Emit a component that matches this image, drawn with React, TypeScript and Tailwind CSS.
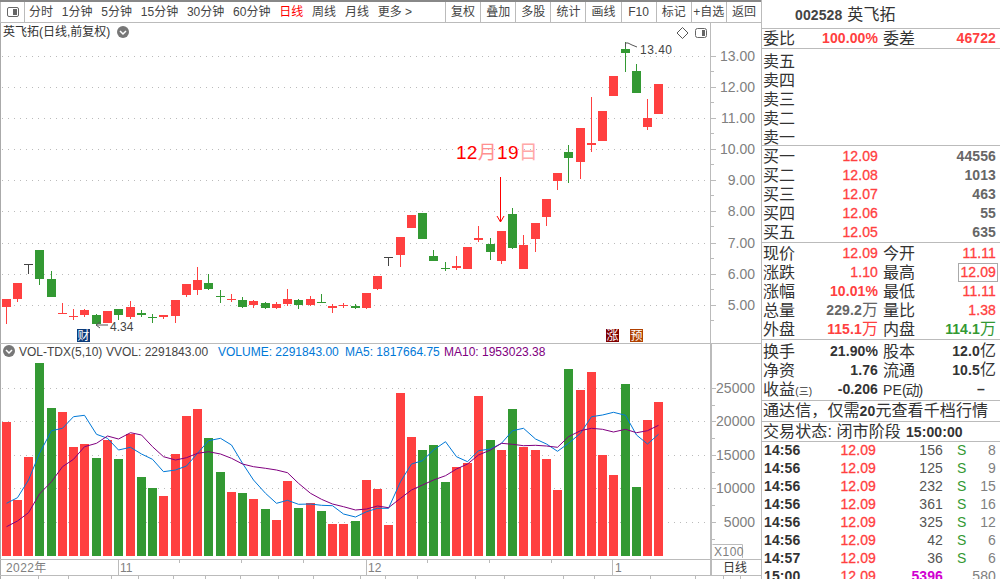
const RED = "#ff4040";
const GREEN = "#339933";

const barX = [
  2, 13, 24, 35, 47, 58, 69, 80, 92, 103, 114, 126, 137, 148, 159, 171, 182, 193, 204, 216, 227, 238, 249, 261, 272, 283,
  294, 306, 317, 328, 339, 351, 362, 373, 384, 396, 407, 418, 429, 441, 452, 463, 474, 486, 497, 508, 519, 531, 542, 553,
  564, 576, 587, 598, 609, 621, 632, 643, 654,
];

// color, body top, body bottom, high, low (page pixels)
type Candle = ["r" | "g" | "k", number, number, number, number];
const candles: Candle[] = [
  ["r", 299, 307, 299, 324], ["r", 283, 299, 283, 302], ["k", 264, 265, 264, 274], ["g", 250, 279, 250, 285],
  ["g", 279, 297, 271, 297], ["r", 313, 314, 303, 314], ["r", 316, 317, 309, 320], ["r", 310, 315, 309, 317],
  ["g", 315, 324, 314, 324], ["r", 311, 323, 311, 323], ["g", 309, 315, 309, 320], ["r", 307, 317, 301, 319],
  ["g", 313, 315, 310, 317], ["g", 317, 318, 314, 323], ["r", 315, 317, 315, 319], ["r", 300, 316, 300, 323],
  ["r", 284, 295, 284, 297], ["r", 280, 290, 267, 295], ["g", 283, 289, 274, 290], ["g", 296, 297, 290, 303],
  ["r", 299, 300, 294, 302], ["g", 300, 307, 297, 308], ["r", 301, 305, 300, 308], ["g", 303, 308, 302, 309],
  ["r", 304, 308, 302, 309], ["r", 299, 304, 289, 306], ["g", 300, 305, 299, 309], ["r", 299, 305, 296, 306],
  ["g", 302, 303, 294, 303], ["r", 306, 308, 304, 313], ["r", 305, 306, 303, 308], ["g", 306, 308, 304, 309],
  ["r", 293, 308, 293, 309], ["r", 276, 289, 276, 290], ["k", 257, 258, 257, 266], ["r", 237, 255, 237, 267],
  ["r", 215, 228, 215, 228], ["g", 213, 239, 213, 239], ["g", 256, 261, 250, 261], ["g", 268, 269, 262, 271],
  ["r", 266, 268, 256, 270], ["r", 247, 269, 247, 269], ["r", 238, 240, 226, 242], ["g", 244, 252, 238, 260],
  ["r", 231, 261, 231, 264], ["g", 214, 248, 208, 249], ["r", 245, 269, 235, 269], ["r", 223, 239, 223, 252],
  ["r", 199, 217, 199, 226], ["r", 173, 181, 173, 190], ["g", 152, 158, 145, 183], ["r", 128, 162, 128, 179],
  ["r", 143, 145, 97, 152], ["r", 111, 141, 111, 141], ["r", 76, 96, 76, 96], ["g", 49, 53, 42, 72],
  ["g", 71, 93, 64, 93], ["r", 118, 127, 99, 130], ["r", 84, 114, 84, 114],
];

// color, bar top
const volumes: ["r" | "g", number][] = [
  ["r", 422], ["r", 500], ["r", 457], ["g", 363], ["g", 408], ["r", 412], ["r", 447], ["r", 444], ["g", 458], ["r", 440],
  ["g", 459], ["r", 434], ["g", 477], ["g", 488], ["r", 496], ["r", 454], ["r", 416], ["r", 409], ["g", 438], ["g", 472],
  ["r", 492], ["g", 493], ["r", 499], ["g", 509], ["r", 520], ["r", 481], ["g", 508], ["r", 503], ["g", 511], ["r", 524],
  ["r", 524], ["g", 521], ["r", 480], ["r", 489], ["r", 525], ["r", 393], ["r", 437], ["g", 450], ["g", 445], ["g", 482],
  ["r", 467], ["r", 463], ["r", 396], ["g", 440], ["r", 450], ["g", 409], ["r", 447], ["r", 450], ["r", 459], ["r", 490],
  ["g", 369], ["r", 390], ["r", 372], ["r", 455], ["r", 475], ["g", 384], ["g", 487], ["r", 420], ["r", 402],
];

const ma5 = [
  503.3, 497.7, 480, 453.3, 430.7, 428.3, 416.7, 415.3, 434.3, 438.3, 450, 447.3, 454, 459.3, 471.7, 470, 466, 453.3, 440.7,
  438.3, 445, 463.3, 480, 493.3, 503.3, 500.3, 504.3, 504, 505.3, 505.7, 514, 517, 511.7, 508.3, 508.3, 481.7, 464, 460.7,
  450, 441.7, 456.7, 461.7, 450.7, 449, 443.3, 430.7, 428.3, 439, 444, 451.3, 443.3, 433.3, 416.7, 415, 412.3, 415.3, 435,
  444, 434.3,
];
const ma10 = [
  526.7, 521, 512.7, 494, 481.7, 466.7, 459.3, 446.7, 443.3, 436, 439, 432.7, 435, 446.7, 456.7, 460, 457.7, 453.3, 451.7,
  454, 458.3, 464, 466.7, 468.3, 470, 472.7, 483.3, 493.3, 499.3, 504, 506.7, 510, 509, 506, 507.7, 498.3, 490, 485, 480,
  475.7, 469, 464, 455, 450, 443.3, 444.3, 445.7, 445.3, 446, 447.3, 436.7, 430.7, 428.3, 429.3, 432, 429.3, 432.7, 430.7,
  425.3,
];

const priceLevels: [string, number][] = [
  ["13.00", 56], ["12.00", 87], ["11.00", 118], ["10.00", 149], ["9.00", 180], ["8.00", 211], ["7.00", 243], ["6.00", 274], ["5.00", 305],
];
const volLevels: [string, number][] = [
  ["25000", 388], ["20000", 421], ["15000", 455], ["10000", 488], ["5000", 522],
];

const toPoints = (ys: number[]) => ys.map((y, i) => `${barX[i] + 4.5},${y}`).join(" ");
const candleColor = (c: string) => (c === "r" ? RED : c === "g" ? GREEN : "#444444");

function ChevronDot({ cx, cy }: { cx: number; cy: number }) {
  return (
    <g>
      <circle cx={cx} cy={cy} r={6} fill="#777777" />
      <polyline points={`${cx - 3},${cy - 1} ${cx},${cy + 2} ${cx + 3},${cy - 1}`} fill="none" stroke="#ffffff" strokeWidth={1.5} />
    </g>
  );
}

function PanelToggle({ x, y }: { x: number; y: number }) {
  return (
    <g>
      <rect x={x + 0.5} y={y + 0.5} width={11} height={9} rx={2} fill="#ffffff" stroke="#666666" />
      <rect x={x + 7} y={y + 2} width={3} height={6} fill="#666666" />
    </g>
  );
}

function Badge({ x, y, bg, text }: { x: number; y: number; bg: string; text: string }) {
  return (
    <g>
      <rect x={x} y={y} width={13} height={13} fill={bg} />
      <text x={x + 0.5} y={y + 11} fontSize={12} fill="#ffffff">
        {text}
      </text>
    </g>
  );
}

function PriceChart() {
  return (
    <svg width={761} height={321} viewBox="0 23 761 321" className="block">
      <rect x={0} y={23} width={1} height={321} fill="#aaaaaa" />
      {priceLevels.map(([label, y]) => (
        <g key={label}>
          <line x1={2} x2={710} y1={y + 0.5} y2={y + 0.5} stroke="#bbbbbb" strokeDasharray="1 5" />
          <rect x={711} y={y} width={5} height={1} fill="#bbbbbb" />
          <rect x={711} y={y + 15} width={3} height={1} fill="#bbbbbb" />
          <text x={755} y={y + 5} fontSize={14} fill="#808080" textAnchor="end">
            {label}
          </text>
        </g>
      ))}
      <rect x={710} y={23} width={1} height={321} fill="#bbbbbb" />
      <rect x={0} y={343} width={761} height={1} fill="#bbbbbb" />

      {candles.map(([c, top, bottom, high, low], i) => (
        <g key={i} fill={candleColor(c)}>
          <rect x={barX[i] + 4} y={high} width={1} height={low - high} />
          <rect x={barX[i]} y={top} width={9} height={bottom - top} />
        </g>
      ))}

      <text x={3} y={36} fontSize={12} fill="#333333">
        英飞拓(日线,前复权)
      </text>
      <ChevronDot cx={123} cy={32} />
      <polygon points="682.5,27.5 688,33 682.5,38.5 677,33" fill="none" stroke="#555555" />
      <PanelToggle x={695} y={28} />

      <polyline points="625.5,47 625.5,43 628,43 632,45 637,47" fill="none" stroke="#555555" />
      <text x={640} y={54} fontSize={12} letterSpacing={0.5} fill="#444444">
        13.40
      </text>
      <polyline points="100,322 96,325 108,325" fill="none" stroke="#555555" />
      <polyline points="96,325 100,328" fill="none" stroke="#555555" />
      <text x={110} y={331} fontSize={12} fill="#444444">
        4.34
      </text>

      <text x={456} y={159} fontSize={19} letterSpacing={0.3} fill="#ff0000">
        12<tspan fill="#ff9090">月</tspan>19<tspan fill="#ffa8a8">日</tspan>
      </text>
      <rect x={500} y={177} width={1} height={45} fill="#ff0000" />
      <polyline points="497,216 500.5,222 504,216" fill="none" stroke="#ff0000" />

      <Badge x={77} y={329} bg="#0a3a7a" text="财" />
      <Badge x={606} y={329} bg="#800000" text="涨" />
      <Badge x={630} y={329} bg="#b04000" text="预" />
    </svg>
  );
}

function VolumeChart() {
  return (
    <svg width={761} height={215} viewBox="0 344 761 215" className="block">
      <rect x={0} y={344} width={1} height={215} fill="#aaaaaa" />
      {volLevels.map(([label, y]) => (
        <g key={label}>
          <line x1={2} x2={710} y1={y + 0.5} y2={y + 0.5} stroke="#bbbbbb" strokeDasharray="1 5" />
          <rect x={712} y={y} width={4} height={1} fill="#bbbbbb" />
          <rect x={712} y={y + 17} width={3} height={1} fill="#bbbbbb" />
          <text x={755} y={y + 5} fontSize={14} fill="#808080" textAnchor="end">
            {label}
          </text>
        </g>
      ))}
      <rect x={710} y={344} width={2} height={215} fill="#bbbbbb" />

      {volumes.map(([c, top], i) => (
        <rect key={i} x={barX[i]} y={top} width={9} height={556 - top} fill={candleColor(c)} />
      ))}
      <polyline points={toPoints(ma5)} fill="none" stroke="#0078d7" />
      <polyline points={toPoints(ma10)} fill="none" stroke="#800080" />

      <ChevronDot cx={9} cy={351} />
      <text y={356} fontSize={12}>
        <tspan x={19} fill="#444444">VOL-TDX(5,10)</tspan>
        <tspan x={106} fill="#444444">VVOL: 2291843.00</tspan>
        <tspan x={218} fill="#0078d7">VOLUME: 2291843.00</tspan>
        <tspan x={345} fill="#0078d7">MA5: 1817664.75</tspan>
        <tspan x={444} fill="#800080">MA10: 1953023.38</tspan>
      </text>

      <path d="M712.5 544.5H742.5V558" fill="none" stroke="#bbbbbb" />
      <text x={714} y={556} fontSize={12} letterSpacing={0.5} fill="#808080">
        X100
      </text>
    </svg>
  );
}

function DateAxis() {
  const shortTicks = [179, 241, 303, 427, 489, 551];
  const bottomTicks = [38, 68, 111, 138, 173, 205, 240, 278, 313, 360, 385, 417, 475, 504, 563, 594, 650, 695, 723, 740];
  return (
    <svg width={761} height={20} viewBox="0 559 761 20" className="block">
      <rect x={0} y={559} width={1} height={20} fill="#aaaaaa" />
      <rect x={0} y={559} width={761} height={1} fill="#bbbbbb" />
      <rect x={0} y={575} width={761} height={1} fill="#bbbbbb" />
      <rect x={710} y={559} width={2} height={16} fill="#bbbbbb" />
      {shortTicks.map((x) => (
        <rect key={x} x={x} y={560} width={1} height={3} fill="#bbbbbb" />
      ))}
      {[118, 366, 612].map((x) => (
        <rect key={x} x={x} y={560} width={1} height={15} fill="#bbbbbb" />
      ))}
      {bottomTicks.map((x) => (
        <rect key={x} x={x} y={576} width={1} height={3} fill="#bbbbbb" />
      ))}
      <g fontSize={12} fill="#808080">
        <text x={6} y={572} letterSpacing={0.4}>2022年</text>
        <text x={120} y={572}>11</text>
        <text x={368} y={572}>12</text>
        <text x={615} y={572}>1</text>
      </g>
      <text x={723} y={572} fontSize={12} fill="#333333">
        日线
      </text>
    </svg>
  );
}

function Toolbar() {
  const periods = ["分时", "1分钟", "5分钟", "15分钟", "30分钟", "60分钟", "日线", "周线", "月线", "更多 >"];
  const actions = ["复权", "叠加", "多股", "统计", "画线", "F10", "标记", "+自选", "返回"];
  return (
    <div className="flex h-[21px] items-center border-b border-[#bbbbbb] text-[12px] text-[#444444]">
      <div className="flex h-full w-[25px] items-center justify-center border-x border-x-[#bbbbbb]">
        <div className="flex h-[10px] w-[12px] justify-end rounded-[2px] border border-[#666666] p-px">
          <div className="w-[4px] bg-[#666666]" />
        </div>
      </div>
      <div className="ml-[4px] flex w-[416px] gap-[8.8px] whitespace-nowrap">
        {periods.map((p) => (
          <span key={p} className={p === "日线" ? "text-[#ff0000]" : ""}>
            {p}
          </span>
        ))}
      </div>
      <div className="flex h-full flex-1">
        {actions.map((a) => (
          <div key={a} className="flex h-full flex-1 items-center justify-center whitespace-nowrap border-l border-[#bbbbbb]">
            {a}
          </div>
        ))}
      </div>
    </div>
  );
}

function Label({ children }: { children: React.ReactNode }) {
  return <span className="shrink-0 text-[16px] leading-none text-[#333333] whitespace-nowrap">{children}</span>;
}

function QuoteRow({
  left,
  leftValue,
  leftClass,
  right,
  rightValue,
  rightClass,
  boxed,
}: {
  left: React.ReactNode;
  leftValue: React.ReactNode;
  leftClass: string;
  right: React.ReactNode;
  rightValue: React.ReactNode;
  rightClass: string;
  boxed?: boolean;
}) {
  return (
    <div className="flex h-[19px] items-center text-[14px]">
      <div className="flex w-[115px] items-center justify-between">
        <Label>{left}</Label>
        <span className={leftClass}>{leftValue}</span>
      </div>
      <div className="ml-[5px] flex flex-1 items-center justify-between">
        <Label>{right}</Label>
        {boxed ? (
          <span className={`-mr-[2px] border border-[#aaaaaa] px-px leading-[17px] ${rightClass}`}>{rightValue}</span>
        ) : (
          <span className={rightClass}>{rightValue}</span>
        )}
      </div>
    </div>
  );
}

function BookRow({ label, price, volume }: { label: string; price?: string; volume?: string }) {
  return (
    <div className="flex h-[19px] items-center text-[14px]">
      <div className="flex w-[115px] items-center justify-between">
        <Label>{label}</Label>
        <span className="text-[#ff4040] [-webkit-text-stroke:0.3px_#ff4040]">{price}</span>
      </div>
      <span className="flex-1 text-right font-bold text-[#666666]">{volume}</span>
    </div>
  );
}

const wan = (s: string) => (
  <>
    {s}
    <span className="text-[16px] font-normal leading-none">万</span>
  </>
);
const yi = (s: string) => (
  <>
    {s}
    <span className="text-[16px] font-normal leading-none">亿</span>
  </>
);

const trades: [string, string, string, string][] = [
  ["14:56", "156", "S", "8"],
  ["14:56", "125", "S", "9"],
  ["14:56", "232", "S", "15"],
  ["14:56", "361", "S", "16"],
  ["14:56", "325", "S", "12"],
  ["14:56", "42", "S", "6"],
  ["14:57", "36", "S", "6"],
  ["15:00", "5396", "", "580"],
];

function SidePanel() {
  const redBold = "font-bold text-[#ff4040]";
  const red = "text-[#ff4040] [-webkit-text-stroke:0.3px_#ff4040]";
  const dark = "font-bold text-[#333333]";
  return (
    <div className="flex h-full w-[239px] flex-col border-l border-[#bbbbbb] tracking-[0.1px]">
      <div className="flex h-[29px] shrink-0 items-center border-b border-[#bbbbbb] pl-[33px] pt-[2px]">
        <span className="text-[14px] font-bold text-[#444444]">002528</span>
        <span className="ml-[5px] text-[16px] leading-none text-[#333333]">英飞拓</span>
      </div>
      <div className="h-[20px] shrink-0 border-b border-[#bbbbbb] pl-px pr-[4px]">
        <QuoteRow left="委比" leftValue="100.00%" leftClass={redBold} right="委差" rightValue="46722" rightClass={redBold} />
      </div>
      <div className="h-[97px] shrink-0 border-b border-[#bbbbbb] pl-px pr-[4px] pt-[3px]">
        {["卖五", "卖四", "卖三", "卖二", "卖一"].map((l) => (
          <BookRow key={l} label={l} />
        ))}
      </div>
      <div className="h-[97px] shrink-0 border-b border-[#bbbbbb] pl-px pr-[4px] pt-px">
        <BookRow label="买一" price="12.09" volume="44556" />
        <BookRow label="买二" price="12.08" volume="1013" />
        <BookRow label="买三" price="12.07" volume="463" />
        <BookRow label="买四" price="12.06" volume="55" />
        <BookRow label="买五" price="12.05" volume="635" />
      </div>
      <div className="h-[97px] shrink-0 border-b border-[#bbbbbb] pl-px pr-[4px] pt-px">
        <QuoteRow left="现价" leftValue="12.09" leftClass={red} right="今开" rightValue="11.11" rightClass={red} />
        <QuoteRow left="涨跌" leftValue="1.10" leftClass={red} right="最高" rightValue="12.09" rightClass={red} boxed />
        <QuoteRow left="涨幅" leftValue="10.01%" leftClass={redBold} right="最低" rightValue="11.11" rightClass={red} />
        <QuoteRow left="总量" leftValue={wan("229.2")} leftClass="font-bold text-[#666666]" right="量比" rightValue="1.38" rightClass={red} />
        <QuoteRow left="外盘" leftValue={wan("115.1")} leftClass={redBold} right="内盘" rightValue={wan("114.1")} rightClass="font-bold text-[#339933]" />
      </div>
      <div className="h-[61px] shrink-0 border-b border-[#bbbbbb] pl-px pr-[4px] pt-[2px]">
        <QuoteRow left="换手" leftValue="21.90%" leftClass={dark} right="股本" rightValue={yi("12.0")} rightClass={dark} />
        <QuoteRow left="净资" leftValue="1.76" leftClass={dark} right="流通" rightValue={yi("10.5")} rightClass={dark} />
        <QuoteRow
          left={
            <>
              收益<span className="text-[10px]">(三)</span>
            </>
          }
          leftValue="-0.206"
          leftClass={dark}
          right={
            <span className="text-[14px]">
              PE<span className="tracking-[-1px]">(动)</span>
            </span>
          }
          rightValue={<span className="mr-[11px]">–</span>}
          rightClass={dark}
        />
      </div>
      <div className="flex h-[21px] shrink-0 items-center whitespace-nowrap border-b border-[#bbbbbb] pl-px text-[16px] leading-none text-[#333333]">
        通达信，仅需<b className="text-[14px]">20</b>元查看千档行情
      </div>
      <div className="flex h-[20px] shrink-0 items-center whitespace-nowrap border-b border-[#bbbbbb] pl-px text-[16px] leading-none text-[#333333]">
        交易状态: 闭市阶段<b className="ml-[5px] text-[14px]">15:00:00</b>
      </div>
      <div className="-mt-px pl-[2px] pr-[4px] text-[14px]">
        {trades.map(([time, vol, side, count], i) => (
          <div key={i} className="flex h-[18px] items-center">
            <span className="w-[70px] font-bold text-[#333333]">{time}</span>
            <span className="w-[42px] text-right text-[#ff4040] [-webkit-text-stroke:0.3px_#ff4040]">12.09</span>
            <span className={`w-[67px] text-right ${vol === "5396" ? "font-bold text-[#d000d0]" : "text-[#555555]"}`}>{vol}</span>
            <span className="ml-[14px] w-[9px] text-[#339933]">{side}</span>
            <span className="flex-1 text-right text-[#808080]">{count}</span>
          </div>
        ))}
      </div>
    </div>
  );
}

export default function App() {
  return (
    <div className="flex h-[579px] w-[1000px] overflow-hidden bg-white [font-family:'Liberation_Sans','Noto_Sans_CJK_SC',sans-serif]">
      <div className="flex w-[761px] flex-col border-t-2 border-[#888888]">
        <Toolbar />
        <PriceChart />
        <VolumeChart />
        <DateAxis />
      </div>
      <SidePanel />
    </div>
  );
}
